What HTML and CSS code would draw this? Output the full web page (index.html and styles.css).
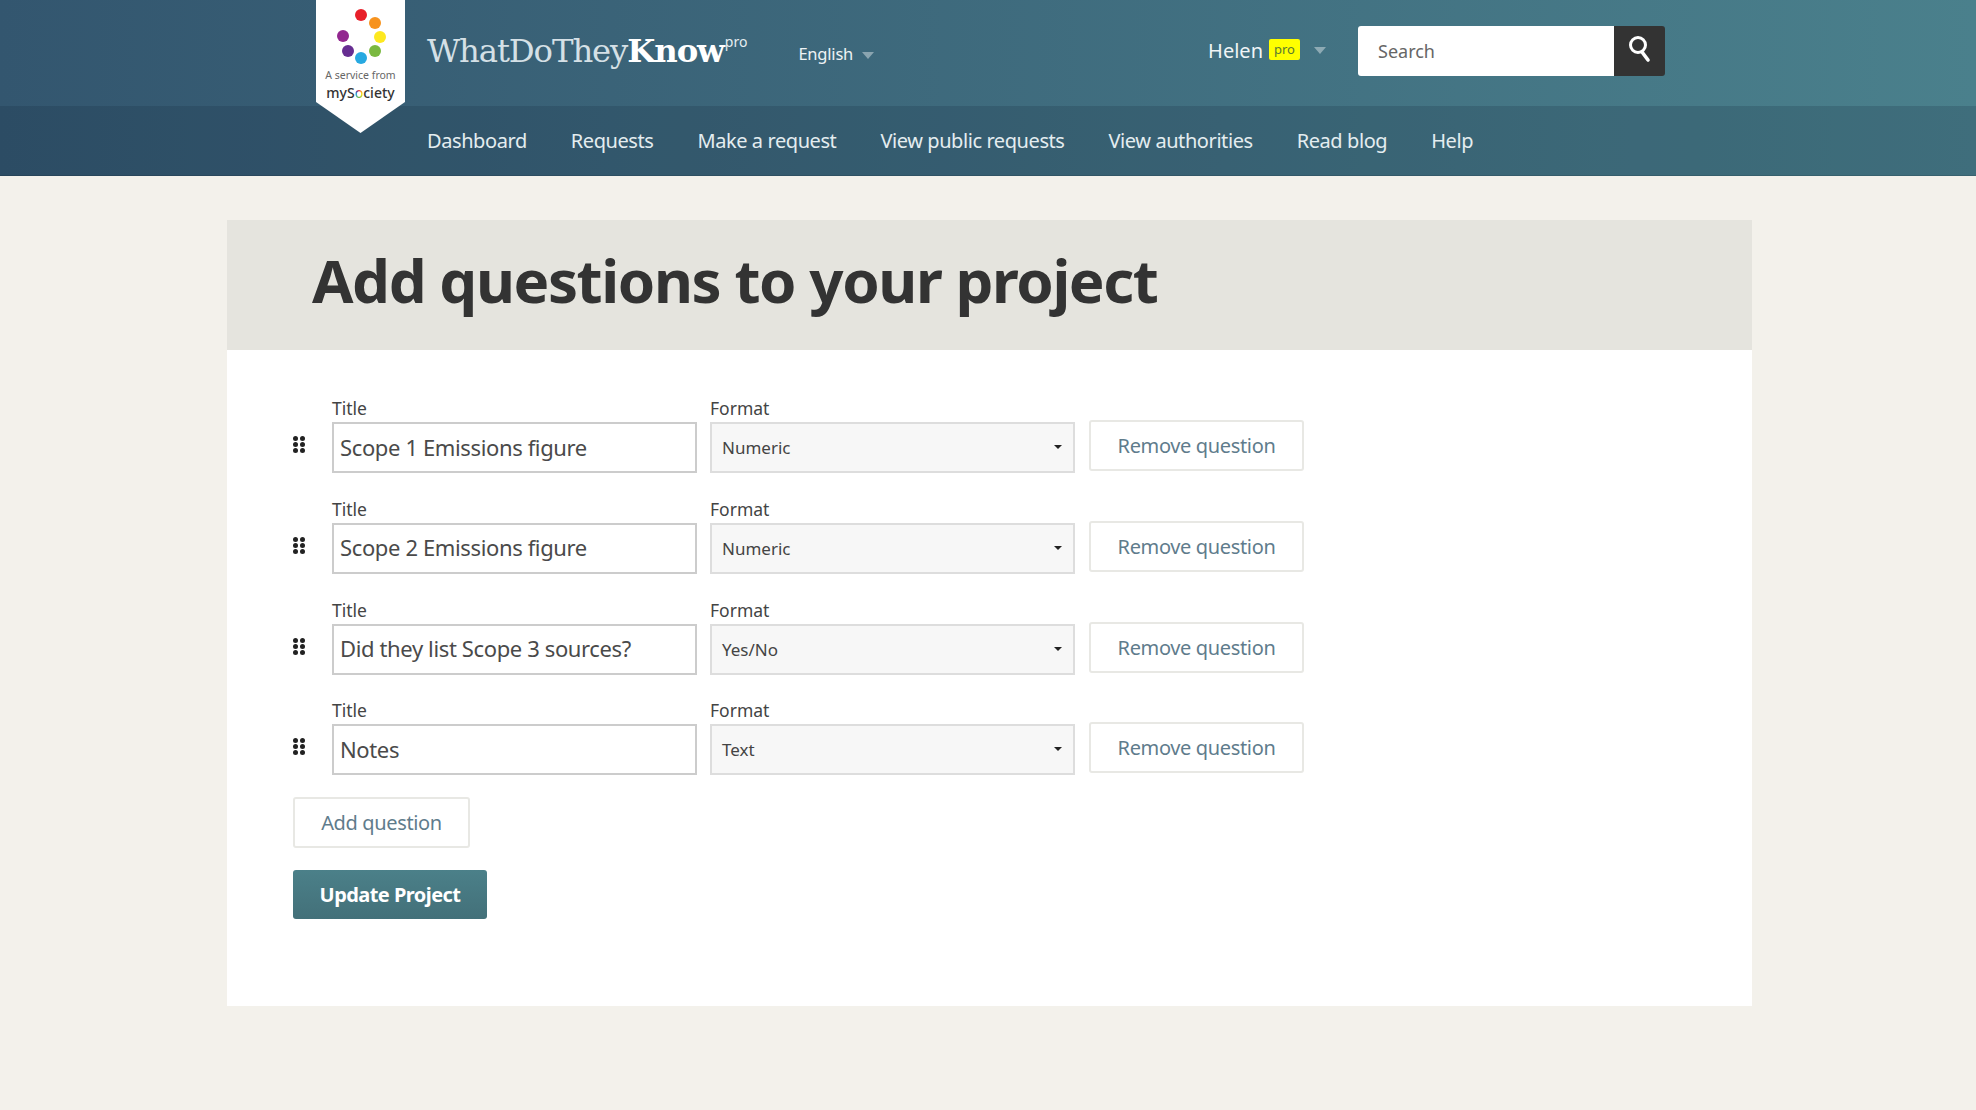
FILE: index.html
```html
<!DOCTYPE html>
<html lang="en">
  <head>
    <meta charset="UTF-8" />
    <meta name="viewport" content="width=device-width, initial-scale=1.0" />
    <title>Add questions to your project</title>
    <link rel="stylesheet" href="styles.css">
  </head>
  <body>
    <header class="site-header">
      <div class="topbar">
        <div class="badge">
          <svg class="badge-dots" width="60" height="56" viewBox="0 0 60 56">
            <circle cx="30" cy="7" r="6" fill="#e8202a"/>
            <circle cx="44" cy="15" r="6" fill="#f7931e"/>
            <circle cx="49" cy="29" r="6" fill="#fde81f"/>
            <circle cx="44" cy="43" r="6" fill="#7ab940"/>
            <circle cx="30" cy="50" r="6" fill="#27a9e1"/>
            <circle cx="17" cy="43" r="6" fill="#662d91"/>
            <circle cx="12" cy="28" r="6" fill="#92278f"/>
          </svg>
          <span class="badge-from">A service from</span>
          <span class="badge-name">myS<span class="badge-o">o</span>ciety</span>
        </div>
        <a class="brand" href="#">WhatDoThey<b>Know</b><sup>pro</sup></a>
        <a class="lang" href="#">English<i class="caret"></i></a>
        <a class="user" href="#">Helen <span class="pro">pro</span><i class="caret"></i></a>
        <form class="search">
          <input type="text" placeholder="Search">
          <button type="button" aria-label="Search">
            <svg width="26" height="28" viewBox="0 0 26 28">
              <circle cx="11" cy="10" r="7.5" fill="none" stroke="#fff" stroke-width="3"/>
              <path d="M15 17l6 8" stroke="#fff" stroke-width="3.6" stroke-linecap="round"/>
            </svg>
          </button>
        </form>
      </div>
      <nav class="mainnav">
        <a href="#">Dashboard</a>
        <a href="#">Requests</a>
        <a href="#">Make a request</a>
        <a href="#">View public requests</a>
        <a href="#">View authorities</a>
        <a href="#">Read blog</a>
        <a href="#">Help</a>
      </nav>
    </header>

    <main class="card">
      <h1>Add questions to your project</h1>
      <div class="card-body">
        <div class="question">
          <span class="handle"><i></i><i></i><i></i><i></i><i></i><i></i></span>
          <label class="field"><span>Title</span><input type="text" value="Scope 1 Emissions figure"></label>
          <label class="field"><span>Format</span><div class="select">Numeric</div></label>
          <a class="btn" href="#">Remove question</a>
        </div>
        <div class="question">
          <span class="handle"><i></i><i></i><i></i><i></i><i></i><i></i></span>
          <label class="field"><span>Title</span><input type="text" value="Scope 2 Emissions figure"></label>
          <label class="field"><span>Format</span><div class="select">Numeric</div></label>
          <a class="btn" href="#">Remove question</a>
        </div>
        <div class="question">
          <span class="handle"><i></i><i></i><i></i><i></i><i></i><i></i></span>
          <label class="field"><span>Title</span><input type="text" value="Did they list Scope 3 sources?"></label>
          <label class="field"><span>Format</span><div class="select">Yes/No</div></label>
          <a class="btn" href="#">Remove question</a>
        </div>
        <div class="question">
          <span class="handle"><i></i><i></i><i></i><i></i><i></i><i></i></span>
          <label class="field"><span>Title</span><input type="text" value="Notes"></label>
          <label class="field"><span>Format</span><div class="select">Text</div></label>
          <a class="btn" href="#">Remove question</a>
        </div>
        <a class="btn btn-add" href="#">Add question</a>
        <button class="btn-update" type="button">Update Project</button>
      </div>
    </main>
  </body>
</html>
```

FILE: styles.css
```css
body {
  margin: 0;
  background-color: #f3f1eb;
  font-family: "Noto Sans", Arial, sans-serif;
  color: #333;
}

a {
  text-decoration: none;
}

/* header */
.site-header {
  background: linear-gradient(to right, #33566f, #4a808c);
}

.topbar {
  position: relative;
  display: flex;
  align-items: center;
  height: 106px;
  padding: 0 311px 5px 427px;
  box-sizing: border-box;
}

.badge {
  position: absolute;
  left: 316px;
  top: 0;
  width: 89px;
  height: 133px;
  padding-top: 8px;
  box-sizing: border-box;
  background: #fff;
  clip-path: polygon(0 0, 100% 0, 100% 102px, 50% 100%, 0 102px);
  display: flex;
  flex-direction: column;
  align-items: center;
  color: #555;
  z-index: 2;
}

.badge-dots {
  margin-bottom: 4px;
}

.badge-from {
  font-size: 10.5px;
  line-height: 15px;
  color: #666;
  white-space: nowrap;
}

.badge-name {
  font-size: 14px;
  line-height: 19px;
  font-weight: 500;
  color: #333;
}

.badge-o {
  background: conic-gradient(#e8202a, #f7931e, #fde81f, #7ab940, #27a9e1, #662d91, #e8202a);
  -webkit-background-clip: text;
  background-clip: text;
  color: transparent;
}

.brand {
  font-family: "DejaVu Serif", serif;
  font-size: 32.3px;
  letter-spacing: -1.1px;
  color: #d5e0e6;
  font-weight: 200;
}

.brand b {
  color: #fff;
  font-weight: 700;
}

.brand sup {
  font-family: "Noto Sans", sans-serif;
  font-size: 14px;
  font-weight: 400;
  letter-spacing: 0;
  color: #e6edf0;
  position: relative;
  top: -3px;
  margin-left: 1px;
  vertical-align: super;
  line-height: 0;
}

.lang {
  margin-left: 51px;
  font-size: 16.5px;
  letter-spacing: -0.2px;
  color: #eef3f5;
  position: relative;
  top: 3px;
}

.caret {
  display: inline-block;
  width: 0;
  height: 0;
  margin-left: 9px;
  vertical-align: middle;
  border-left: 6.5px solid transparent;
  border-right: 6.5px solid transparent;
  border-top: 7px solid rgba(255, 255, 255, 0.4);
}

.user {
  margin-left: auto;
  font-size: 20px;
  color: #f0f5f6;
  display: flex;
  align-items: center;
}

.pro {
  background: #ff0;
  color: #5a7a30;
  font-size: 13px;
  line-height: 21px;
  padding: 0 5px;
  border-radius: 2px;
  margin: -3px 0 0 6px;
}

.user .caret {
  margin: 0 2px 0 14px;
}

.search {
  display: flex;
  margin-left: 30px;
}

.search input {
  width: 256px;
  height: 50px;
  box-sizing: border-box;
  border: 0;
  border-radius: 3px 0 0 3px;
  padding: 0 20px;
  font-family: inherit;
  font-size: 18px;
}

.search input::placeholder {
  color: #666;
}

.search button {
  width: 51px;
  height: 50px;
  border: 0;
  padding: 0;
  border-radius: 0 3px 3px 0;
  background: #333;
}

.mainnav {
  display: flex;
  align-items: center;
  gap: 44px;
  height: 70px;
  padding-left: 427px;
  background: rgba(20, 40, 60, 0.2);
  border-bottom: 1px solid rgba(0, 0, 0, 0.1);
  box-sizing: border-box;
}

.mainnav a {
  font-size: 20px;
  letter-spacing: -0.42px;
  color: #e4edf0;
}

/* card */
.card {
  width: 1525px;
  margin: 44px 0 0 227px;
  background: #fff;
}

h1 {
  margin: 0;
  height: 130px;
  line-height: 121px;
  padding-left: 85px;
  background: #e5e4de;
  font-size: 60px;
  letter-spacing: -1.4px;
  font-weight: 700;
  color: #333;
}

.card-body {
  padding: 35px 66px 87px;
}

.question {
  display: flex;
  align-items: flex-end;
  gap: 14px;
  height: 88px;
  margin-bottom: 12.8px;
}

.handle {
  display: grid;
  grid-template-columns: 5px 5px;
  gap: 1px 2px;
  align-self: flex-end;
  margin: 0 13px 20px 0;
  width: 12px;
}

.handle i {
  width: 5px;
  height: 5px;
  background: #222;
  border-radius: 50%;
}

.field {
  display: flex;
  flex-direction: column;
  width: 365px;
}

.field + .field {
  margin-left: -1px;
}

.field span {
  font-size: 17.5px;
  line-height: 27px;
  color: #444;
}

.field input {
  height: 51px;
  box-sizing: border-box;
  border: 2px solid #ccc;
  padding: 0 6px 2px;
  font-family: inherit;
  font-size: 22px;
  letter-spacing: -0.37px;
  color: #4a4a4a;
}

.select {
  position: relative;
  height: 51px;
  box-sizing: border-box;
  border: 2px solid #ddd;
  background: #f7f7f7;
  padding: 0 10px;
  line-height: 47px;
  font-size: 17px;
  color: #444;
}

.select::after {
  content: "";
  position: absolute;
  right: 11px;
  top: 21px;
  border-left: 4px solid transparent;
  border-right: 4px solid transparent;
  border-top: 4px solid #222;
}

.btn {
  display: inline-block;
  box-sizing: border-box;
  height: 51px;
  line-height: 47px;
  width: 215px;
  text-align: center;
  border: 2px solid #e8e8e4;
  border-radius: 3px;
  background: #fff;
  font-size: 20px;
  letter-spacing: -0.35px;
  color: #5f7c8c;
  margin-bottom: 2px;
}

.btn-add {
  display: block;
  width: 177px;
  margin: 22px 0 0;
}

.btn-update {
  display: block;
  width: 194px;
  height: 49px;
  margin-top: 22px;
  border: 0;
  border-radius: 3px;
  background: linear-gradient(to bottom, #4b8089, #437079);
  color: #fff;
  font-family: inherit;
  font-size: 20px;
  letter-spacing: -0.55px;
  font-weight: 700;
}
```
